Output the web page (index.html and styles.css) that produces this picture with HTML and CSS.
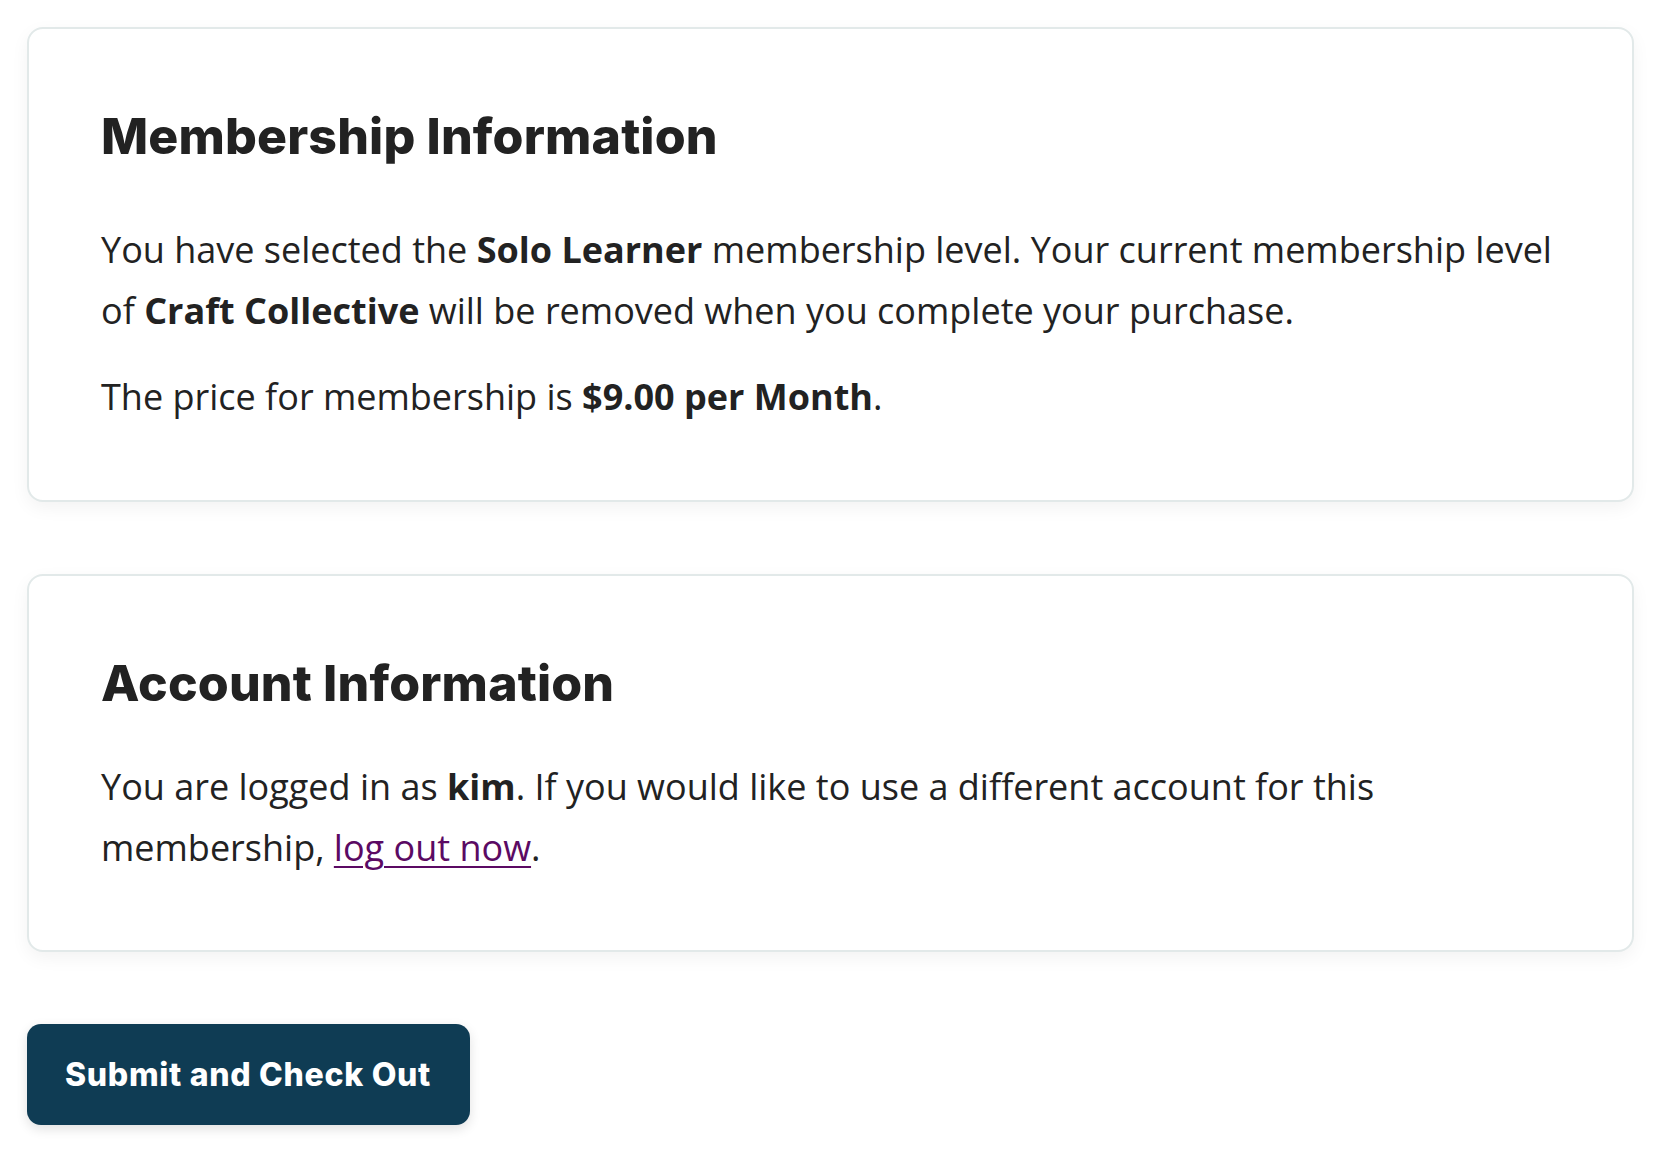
FILE: index.html
```html
<!DOCTYPE html>
<html lang="en">
<head>
<meta charset="utf-8">
<title>Membership Checkout</title>
<link rel="stylesheet" href="styles.css">
</head>
<body>
<main class="page">
  <section class="card card--membership">
    <h2 class="card-title">Membership Information</h2>
    <div class="card-body">
      <p class="text">You have selected the <strong>Solo Learner</strong> membership level. Your current membership level of <strong>Craft Collective</strong> will be removed when you complete your purchase.</p>
      <p class="text">The price for membership is <strong>$9.00 per Month</strong>.</p>
    </div>
  </section>
  <section class="card card--account">
    <h2 class="card-title">Account Information</h2>
    <div class="card-body">
      <p class="text">You are logged in as <strong>kim</strong>. If you would like to use a different account for this membership, <a class="link" href="#">log out now</a>.</p>
    </div>
  </section>
  <div class="actions">
    <button class="btn-submit" type="button">Submit and Check Out</button>
  </div>
</main>
</body>
</html>
```
FILE: styles.css
```css
html, body {
  margin: 0;
  padding: 0;
  background: #ffffff;
}
.page {
  padding: 27px 28px 27px 27px;
  font-family: "Open Sans", "Noto Sans", sans-serif;
  color: #222222;
}
.card {
  border: 2px solid #e2e9e9;
  border-radius: 16px;
  background: #ffffff;
  padding: 77px 72px 72px 72px;
  box-shadow: 0 6px 18px rgba(0, 0, 0, 0.05);
  margin-bottom: 72px;
}
.card-title {
  font-family: "Inter", "Lato", sans-serif;
  font-weight: 800;
  font-size: 50px;
  line-height: 60px;
  letter-spacing: 0.15px;
  margin: 0;
  color: #222222;
}
.card--membership .card-body {
  margin-top: 53px;
}
.card--account .card-body {
  margin-top: 43px;
}
.text {
  font-size: 36px;
  line-height: 61.2px;
  margin: 0;
}
.text + .text {
  margin-top: 25px;
}
.text strong {
  font-weight: 700;
}
.link {
  color: #5b0a63;
  text-decoration: underline;
  text-decoration-thickness: 2px;
  text-underline-offset: 5px;
}
.actions {
  display: flex;
}
.btn-submit {
  font-family: "Inter", "Lato", sans-serif;
  font-weight: 800;
  font-size: 32px;
  line-height: 39px;
  letter-spacing: 0.7px;
  color: #ffffff;
  background: #0f3c54;
  border: none;
  border-radius: 14px;
  padding: 31px 39px 31px 38px;
  box-shadow: 0 4px 12px rgba(0, 0, 0, 0.12);
  cursor: pointer;
}
```
